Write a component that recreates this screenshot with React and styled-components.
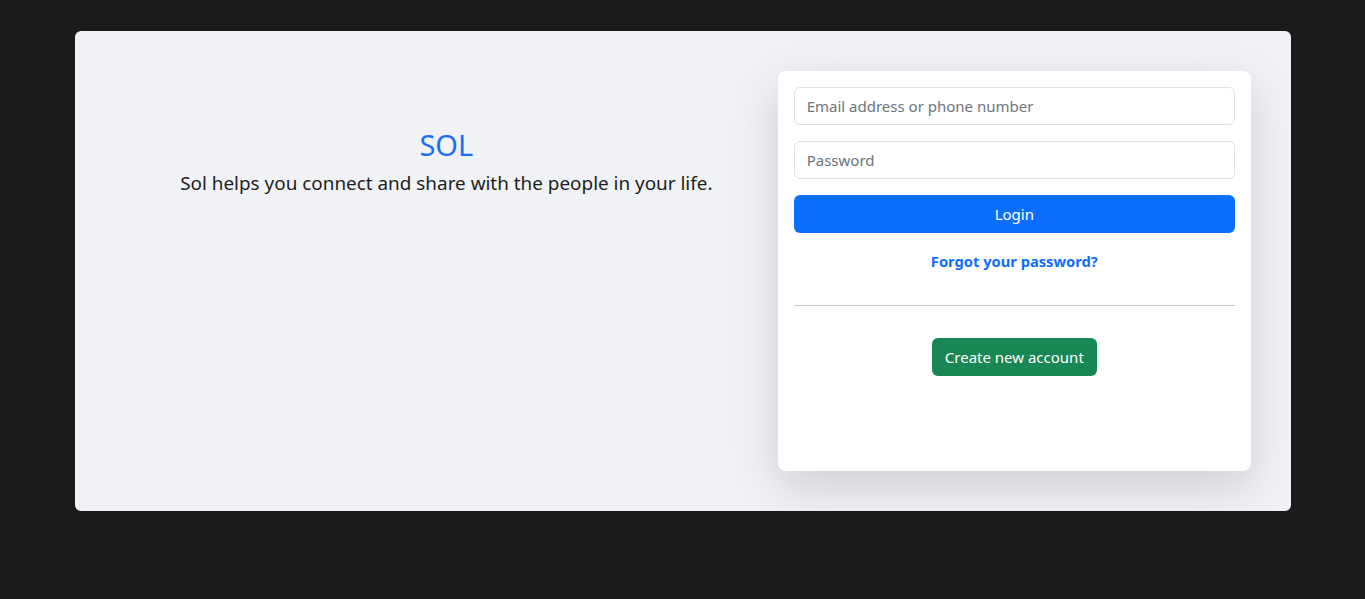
import React from "react";
import styled, { createGlobalStyle } from "styled-components";

const GlobalStyle = createGlobalStyle`
  * { box-sizing: border-box; }
  body {
    margin: 0;
    background: #1a1a1a;
    font-family: "Noto Sans", "Open Sans", sans-serif;
    color: #212529;
  }
`;

const Page = styled.div`
  min-height: 599px;
  padding: 31px 74px 0 75px;
`;

const Panel = styled.div`
  display: grid;
  grid-template-columns: 7fr 5fr;
  height: 480px;
  padding: 40px;
  background: #f0f2f5;
  border-radius: 6px;
`;

const Intro = styled.div`
  display: flex;
  flex-direction: column;
  align-items: center;
  padding-top: 58px;
`;

const Brand = styled.h2`
  margin: 0 0 7px;
  font-size: 29px;
  font-weight: 400;
  line-height: 32px;
  color: #1c6ff5;
`;

const Tagline = styled.p`
  margin: 0;
  font-size: 18.9px;
  line-height: 30px;
  color: #1c1e21;
`;

const Card = styled.div`
  display: flex;
  flex-direction: column;
  height: 400px;
  padding: 16px;
  background: #fff;
  border-radius: 8px;
  box-shadow: 0 16px 48px rgba(0, 0, 0, 0.15);
`;

const Field = styled.input`
  height: 38px;
  margin-bottom: 16px;
  padding: 6px 12px;
  border: 1px solid #dee2e6;
  border-radius: 6px;
  font-family: inherit;
  font-size: 15px;
  color: #212529;
  &::placeholder {
    color: #6c757d;
  }
`;

const Button = styled.button`
  height: 38px;
  padding: 0 13px;
  border: none;
  border-radius: 6px;
  background: ${(p) => p.$bg};
  color: #fff;
  font-family: inherit;
  font-size: 15px;
  cursor: pointer;
`;

const Forgot = styled.a`
  align-self: center;
  margin-top: 16px;
  font-size: 14.7px;
  font-weight: 700;
  line-height: 24px;
  color: #0d6efd;
  text-decoration: none;
`;

const Divider = styled.hr`
  width: 100%;
  margin: 32px 0 32px;
  border: none;
  border-top: 1px solid #c8c8c8;
`;

const Center = styled.div`
  display: flex;
  justify-content: center;
`;

export default function App() {
  return (
    <>
      <GlobalStyle />
      <Page>
        <Panel>
          <Intro>
            <Brand>SOL</Brand>
            <Tagline>Sol helps you connect and share with the people in your life.</Tagline>
          </Intro>
          <Card>
            <Field type="text" placeholder="Email address or phone number" />
            <Field type="password" placeholder="Password" />
            <Button $bg="#0d6efd">Login</Button>
            <Forgot href="#">Forgot your password?</Forgot>
            <Divider />
            <Center>
              <Button $bg="#198754">Create new account</Button>
            </Center>
          </Card>
        </Panel>
      </Page>
    </>
  );
}
